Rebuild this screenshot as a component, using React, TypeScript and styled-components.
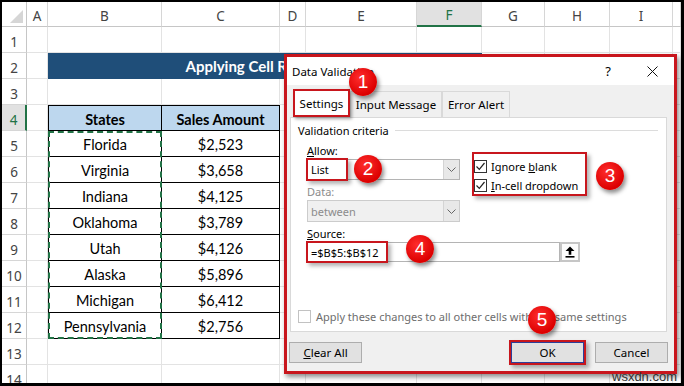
import styled, { createGlobalStyle, css } from "styled-components";

const GlobalStyle = createGlobalStyle`
  body {
    margin: 0;
    background: #fff;
    overflow: hidden;
  }
`;

const RED = "#c8161d";

const Frame = styled.div`
  position: relative;
  width: 684px;
  height: 386px;
  box-sizing: border-box;
  padding: 2px 3px 3px 2px;
  background: #000;
  overflow: hidden;
`;

const Sheet = styled.div`
  display: grid;
  grid-template-columns: 25px 21px 114px 118px 26px 111px 65px 63px 65px 63px 1fr;
  grid-template-rows: 25px repeat(14, 26px);
  height: 100%;
  background: #fff;
  overflow: hidden;
  font-family: Lato, "Liberation Sans", sans-serif;
`;

type Pos = { $r: number; $c: number; $span?: number };

const place = css<Pos>`
  grid-row: ${(p) => p.$r};
  grid-column: ${(p) => `${p.$c} / span ${p.$span ?? 1}`};
  box-sizing: border-box;
`;

const Corner = styled.div<Pos>`
  ${place}
  display: flex;
  align-items: flex-end;
  justify-content: flex-end;
  padding: 0 3px 3px 0;
  border-right: 1px solid #c6c6c6;
  border-bottom: 1px solid #c6c6c6;
`;

const ColHeader = styled.div<Pos & { $active?: boolean }>`
  ${place}
  display: flex;
  align-items: center;
  justify-content: center;
  padding-top: 3px;
  font-family: "Noto Sans", "Open Sans", sans-serif;
  font-size: 13.5px;
  color: ${(p) => (p.$active ? "#217346" : "#444")};
  background: ${(p) => (p.$active ? "#e1e1e1" : "#fff")};
  border-right: 1px solid #d6d6d6;
  border-bottom: ${(p) => (p.$active ? "2px solid #217346" : "1px solid #c6c6c6")};
`;

const RowHeader = styled.div<Pos & { $active?: boolean }>`
  ${place}
  display: flex;
  align-items: center;
  justify-content: center;
  padding-top: 4px;
  font-family: "Noto Sans", "Open Sans", sans-serif;
  font-size: 13.5px;
  color: ${(p) => (p.$active ? "#217346" : "#444")};
  background: ${(p) => (p.$active ? "#e1e1e1" : "#fff")};
  border-bottom: 1px solid #d6d6d6;
  border-right: ${(p) => (p.$active ? "2px solid #217346" : "1px solid #c6c6c6")};
`;

const Cell = styled.div<Pos>`
  ${place}
  border-right: 1px solid #e3e3e3;
  border-bottom: 1px solid #e3e3e3;
`;

const Banner = styled.div<Pos>`
  ${place}
  display: flex;
  align-items: center;
  justify-content: center;
  background: #1f4e79;
  color: #fff;
  font-size: 15px;
  font-weight: 700;
`;

const TableCell = styled.div<Pos & { $head?: boolean; $left?: boolean }>`
  ${place}
  display: flex;
  align-items: center;
  justify-content: center;
  padding-top: 2px;
  font-size: 14.5px;
  font-weight: ${(p) => (p.$head ? 700 : 400)};
  color: #000;
  background: ${(p) => (p.$head ? "#bdd7ee" : "#fff")};
  border-right: 1px solid #000;
  border-bottom: 1px solid #000;
  border-left: ${(p) => (p.$left ? "1px solid #000" : "none")};
  border-top: ${(p) => (p.$head ? "1px solid #000" : "none")};
`;

const CopyMarquee = styled.div`
  grid-row: 6 / 14;
  grid-column: 3;
  border: 2px dashed #217346;
  z-index: 1;
  pointer-events: none;
`;

/* dialog */

const Highlight = styled.div`
  position: absolute;
  left: 284px;
  top: 54px;
  width: 393px;
  height: 320px;
  box-sizing: border-box;
  border: 3px solid ${RED};
  box-shadow: 2px 3px 5px rgba(0, 0, 0, 0.45);
  display: flex;
  z-index: 2;
`;

const Window = styled.div`
  flex: 1;
  display: flex;
  flex-direction: column;
  background: #f0f0f0;
  font-family: "Noto Sans", "Open Sans", sans-serif;
  font-size: 11px;
  color: #000;
`;

const TitleBar = styled.div`
  height: 28px;
  display: flex;
  align-items: center;
  background: #fff;
  padding-left: 5px;
  font-size: 11.5px;
`;

const Title = styled.span`
  flex: 1;
`;

const TitleButton = styled.div`
  width: 44px;
  height: 100%;
  display: flex;
  align-items: center;
  justify-content: center;
  font-size: 13px;
`;

const Body = styled.div`
  flex: 1;
  display: flex;
  flex-direction: column;
  padding: 4px 7px 8px 3px;
`;

const Tabs = styled.div`
  height: 28px;
  display: flex;
  align-items: flex-end;
  padding-left: 3px;
`;

const Tab = styled.div<{ $w: number; $selected?: boolean }>`
  position: relative;
  width: ${(p) => p.$w}px;
  height: ${(p) => (p.$selected ? 28 : 26)}px;
  box-sizing: border-box;
  display: flex;
  align-items: center;
  justify-content: center;
  font-size: 11.5px;
  background: ${(p) => (p.$selected ? "#fff" : "#f0f0f0")};
  border: ${(p) => (p.$selected ? `2px solid ${RED}` : "1px solid #d9d9d9")};
  border-bottom: ${(p) => (p.$selected ? `2px solid ${RED}` : "none")};
  box-shadow: ${(p) => (p.$selected ? "2px 2px 3px rgba(0,0,0,0.35)" : "none")};
  z-index: ${(p) => (p.$selected ? 1 : 0)};
`;

const Panel = styled.div`
  height: 215px;
  box-sizing: border-box;
  display: flex;
  flex-direction: column;
  background: #fff;
  border: 1px solid #d9d9d9;
  padding: 4px 8px 7px 7px;
`;

const GroupTitle = styled.div`
  height: 16px;
  display: flex;
  align-items: center;
  gap: 6px;
  &::after {
    content: "";
    flex: 1;
    height: 1px;
    background: #dcdcdc;
  }
`;

const Fields = styled.div`
  display: grid;
  grid-template-columns: 153px 1fr;
  grid-template-rows: 18px 21px 20px 22px 20px 20px;
  margin: 3px 0 0 9px;
`;

const Label = styled.div<{ $disabled?: boolean; $row: number }>`
  grid-column: 1;
  grid-row: ${(p) => p.$row};
  display: flex;
  align-items: ${(p) => (p.$row === 1 ? "flex-end" : "center")};
  padding-top: ${(p) => (p.$row === 1 ? 0 : 4)}px;
  line-height: 16px;
  color: ${(p) => (p.$disabled ? "#8c8c8c" : "#000")};
`;

const Combo = styled.div<{ $disabled?: boolean; $row: number }>`
  grid-column: 1;
  grid-row: ${(p) => p.$row};
  display: flex;
  box-sizing: border-box;
  border: 1px solid ${(p) => (p.$disabled ? "#cccccc" : "#b4b4b4")};
  background: ${(p) => (p.$disabled ? "#f0f0f0" : "#fff")};
  color: ${(p) => (p.$disabled ? "#8c8c8c" : "#000")};
`;

const ComboText = styled.div<{ $flush?: boolean }>`
  flex: 1;
  display: flex;
  align-items: center;
  padding-left: ${(p) => (p.$flush ? 0 : 3)}px;
`;

const ComboArrow = styled.div`
  width: 15px;
  display: flex;
  align-items: center;
  justify-content: center;
  background: #e8e8e8;
  border-left: 1px solid #d4d4d4;
`;

const Mark = styled.span<{ $w: number }>`
  display: flex;
  align-items: center;
  width: ${(p) => p.$w}px;
  height: 100%;
  box-sizing: border-box;
  padding-left: 3px;
  box-shadow: 0 0 0 2px ${RED}, 3px 3px 4px 2px rgba(0, 0, 0, 0.3);
`;

const CheckGroup = styled.div`
  grid-column: 2;
  grid-row: 2 / span 2;
  align-self: start;
  justify-self: start;
  margin: -7px 0 0 12px;
  display: flex;
  flex-direction: column;
  gap: 2px;
  padding: 4px 7px 0 0;
  border: 2px solid ${RED};
  box-shadow: 3px 3px 4px rgba(0, 0, 0, 0.3);
`;

const CheckRow = styled.label<{ $disabled?: boolean }>`
  display: flex;
  align-items: center;
  gap: ${(p) => (p.$disabled ? 5 : 4)}px;
  height: 17px;
  color: ${(p) => (p.$disabled ? "#6d6d6d" : "#000")};
`;

const Box = styled.span<{ $disabled?: boolean }>`
  width: 13px;
  height: 13px;
  box-sizing: border-box;
  display: flex;
  align-items: center;
  justify-content: center;
  border: 1px solid ${(p) => (p.$disabled ? "#c2c2c2" : "#333")};
  background: #fff;
`;

const SourceRow = styled.div`
  grid-column: 1 / span 2;
  grid-row: 6;
  display: flex;
`;

const SourceInput = styled.div`
  width: 253px;
  box-sizing: border-box;
  border: 1px solid #b4b4b4;
  background: #fff;
`;

const CollapseButton = styled.div`
  width: 20px;
  box-sizing: border-box;
  display: flex;
  align-items: center;
  justify-content: center;
  border: 2px solid #c6c6c6;
  background: #fdfdfd;
`;

const ApplyRow = styled(CheckRow)`
  margin-top: auto;
  height: 16px;
`;

const Buttons = styled.div`
  display: flex;
  gap: 11px;
  margin: 10px -1px 0 -1px;
`;

const Button = styled.div<{ $default?: boolean }>`
  width: 73px;
  height: 21px;
  box-sizing: border-box;
  display: flex;
  align-items: center;
  justify-content: center;
  font-size: 11.5px;
  background: #e1e1e1;
  border: 1px solid ${(p) => (p.$default ? "#2a3f9a" : "#adadad")};
  box-shadow: ${(p) =>
    p.$default ? `0 0 0 2px ${RED}, 3px 3px 4px 2px rgba(0,0,0,0.3)` : "none"};
  &:first-child {
    margin-right: auto;
  }
`;

const Badge = styled.div<{ $x: number; $y: number }>`
  position: absolute;
  left: ${(p) => p.$x - 14}px;
  top: ${(p) => p.$y - 14}px;
  width: 28px;
  height: 28px;
  border-radius: 50%;
  display: flex;
  align-items: center;
  justify-content: center;
  background: radial-gradient(circle at 40% 35%, #ff2d2d, #dc0000 70%);
  color: #fff;
  font-family: "Liberation Sans", Arial, sans-serif;
  font-size: 19px;
  box-shadow: 2px 3px 4px rgba(0, 0, 0, 0.45);
  z-index: 3;
`;

const Watermark = styled.div`
  position: absolute;
  left: 612px;
  top: 369px;
  font-family: "Liberation Sans", Arial, sans-serif;
  font-size: 13px;
  color: #333;
  z-index: 3;
`;

const Check = () => (
  <svg width="11" height="11" viewBox="0 0 11 11">
    <path d="M1.5 5.5 L4.3 8.3 L9.5 2" stroke="#222" strokeWidth="1.2" fill="none" />
  </svg>
);

const Chevron = () => (
  <svg width="9" height="5" viewBox="0 0 9 5">
    <path d="M0.5 0.5 L4.5 4.5 L8.5 0.5" stroke="#666" fill="none" />
  </svg>
);

const columns = ["A", "B", "C", "D", "E", "F", "G", "H", "I", ""];

const sales: [string, string][] = [
  ["Florida", "$2,523"],
  ["Virginia", "$3,658"],
  ["Indiana", "$4,125"],
  ["Oklahoma", "$3,789"],
  ["Utah", "$4,126"],
  ["Alaska", "$5,896"],
  ["Michigan", "$6,412"],
  ["Pennsylvania", "$2,756"],
];

const renderRow = (n: number) => {
  const r = n + 1;
  const out = [
    <RowHeader key={`h${n}`} $r={r} $c={1} $active={n === 4}>
      {n}
    </RowHeader>,
  ];
  for (let c = 2; c <= 11; c++) {
    if (n === 2 && c === 3) {
      out.push(
        <Banner key={`b${n}`} $r={r} $c={3} $span={5}>
          Applying Cell Reference
        </Banner>
      );
      c = 7;
      continue;
    }
    if (n >= 4 && n <= 12 && (c === 3 || c === 4)) {
      const head = n === 4;
      const text = head ? (c === 3 ? "States" : "Sales Amount") : sales[n - 5][c - 3];
      out.push(
        <TableCell key={`t${n}-${c}`} $r={r} $c={c} $head={head} $left={c === 3}>
          {text}
        </TableCell>
      );
      continue;
    }
    out.push(<Cell key={`c${n}-${c}`} $r={r} $c={c} />);
  }
  return out;
};

const App = () => {
  return (
    <>
      <GlobalStyle />
      <Frame>
        <Sheet>
          <Corner $r={1} $c={1}>
            <svg width="13" height="13" viewBox="0 0 13 13">
              <path d="M13 0 L13 13 L0 13 Z" fill="#d6d6d6" />
            </svg>
          </Corner>
          {columns.map((col, i) => (
            <ColHeader key={`col${i}`} $r={1} $c={i + 2} $active={col === "F"}>
              {col}
            </ColHeader>
          ))}
          {Array.from({ length: 14 }, (_, i) => renderRow(i + 1))}
          <CopyMarquee />
        </Sheet>

        <Highlight>
          <Window>
            <TitleBar>
              <Title>Data Validation</Title>
              <TitleButton>?</TitleButton>
              <TitleButton>
                <svg width="11" height="11" viewBox="0 0 11 11">
                  <path d="M0.5 0.5 L10.5 10.5 M10.5 0.5 L0.5 10.5" stroke="#111" strokeWidth="1" />
                </svg>
              </TitleButton>
            </TitleBar>
            <Body>
              <Tabs>
                <Tab $w={57} $selected>
                  Settings
                </Tab>
                <Tab $w={92}>Input Message</Tab>
                <Tab $w={68}>Error Alert</Tab>
              </Tabs>
              <Panel>
                <GroupTitle>Validation criteria</GroupTitle>
                <Fields>
                  <Label $row={1}>
                    <span>
                      <u>A</u>llow:
                    </span>
                  </Label>
                  <Combo $row={2}>
                    <ComboText $flush>
                      <Mark $w={38}>List</Mark>
                    </ComboText>
                    <ComboArrow>
                      <Chevron />
                    </ComboArrow>
                  </Combo>
                  <CheckGroup>
                    <CheckRow>
                      <Box>
                        <Check />
                      </Box>
                      <span>
                        Ignore <u>b</u>lank
                      </span>
                    </CheckRow>
                    <CheckRow>
                      <Box>
                        <Check />
                      </Box>
                      <span>
                        <u>I</u>n-cell dropdown
                      </span>
                    </CheckRow>
                  </CheckGroup>
                  <Label $row={3} $disabled>
                    Data:
                  </Label>
                  <Combo $row={4} $disabled>
                    <ComboText>between</ComboText>
                    <ComboArrow>
                      <Chevron />
                    </ComboArrow>
                  </Combo>
                  <Label $row={5}>
                    <span>
                      <u>S</u>ource:
                    </span>
                  </Label>
                  <SourceRow>
                    <SourceInput>
                      <Mark $w={78}>=$B$5:$B$12</Mark>
                    </SourceInput>
                    <CollapseButton>
                      <svg width="10" height="12" viewBox="0 0 10 12">
                        <path d="M5 0.5 L9.5 5 L6.3 5 L6.3 8.8 L3.7 8.8 L3.7 5 L0.5 5 Z" fill="#000" />
                        <rect x="0.5" y="10" width="9" height="1.6" fill="#000" />
                      </svg>
                    </CollapseButton>
                  </SourceRow>
                </Fields>
                <ApplyRow $disabled>
                  <Box $disabled />
                  <span>Apply these changes to all other cells with the same settings</span>
                </ApplyRow>
              </Panel>
              <Buttons>
                <Button>
                  <span>
                    <u>C</u>lear All
                  </span>
                </Button>
                <Button $default>OK</Button>
                <Button>Cancel</Button>
              </Buttons>
            </Body>
          </Window>
        </Highlight>

        <Badge $x={363} $y={82}>1</Badge>
        <Badge $x={368} $y={169}>2</Badge>
        <Badge $x={610} $y={176}>3</Badge>
        <Badge $x={420} $y={249}>4</Badge>
        <Badge $x={542} $y={320}>5</Badge>
        <Watermark>wsxdn.com</Watermark>
      </Frame>
    </>
  );
};

export default App;
